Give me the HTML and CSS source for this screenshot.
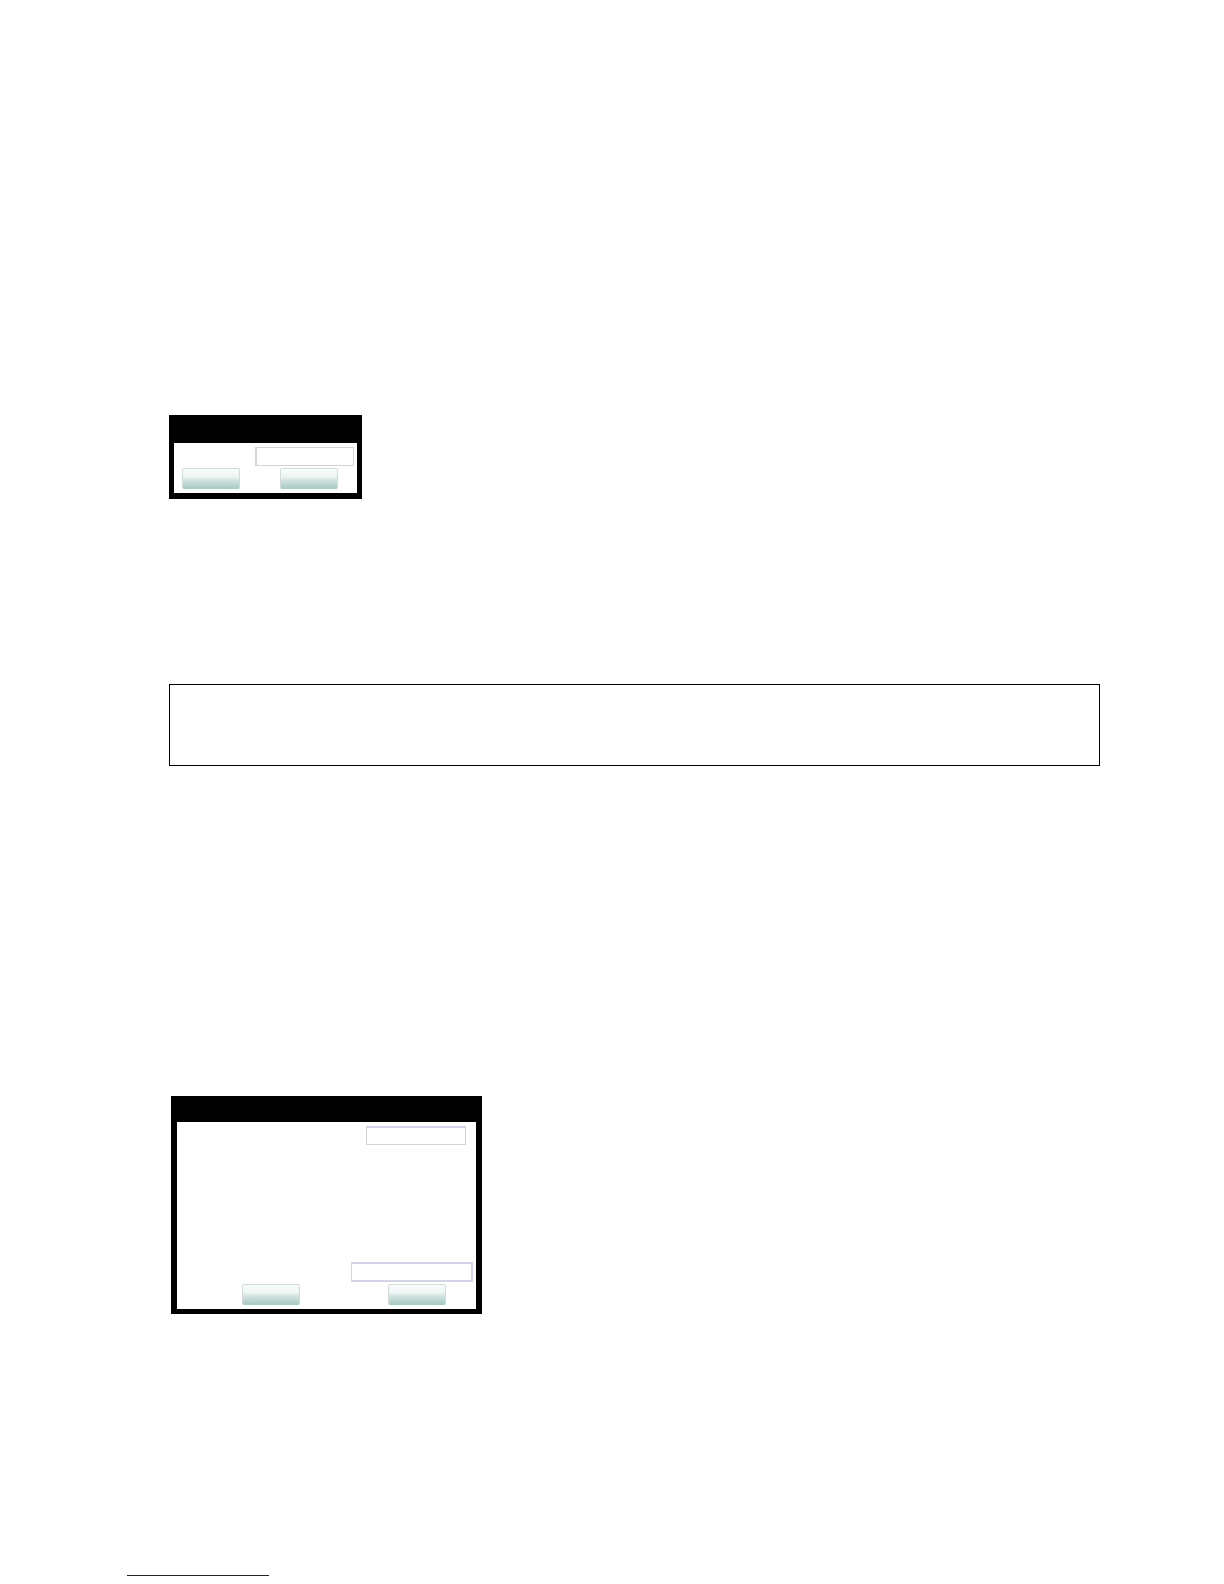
FILE: index.html
```html
<!DOCTYPE html>
<html lang="en">
<head>
    <meta charset="UTF-8">
    <meta name="viewport" content="width=device-width, initial-scale=1.0">
    <title>Document</title>
    <link rel="stylesheet" href="styles.css">
</head>
<body>
    <main class="content">
        <form class="dialog dialog-small">
            <div class="field-row">
                <input class="field" type="text" aria-label="Value">
            </div>
            <div class="button-row">
                <button class="dialog-button" type="button" aria-label="OK"></button>
                <button class="dialog-button" type="button" aria-label="Cancel"></button>
            </div>
        </form>

        <section class="note"></section>

        <form class="dialog dialog-large">
            <div class="field-row">
                <input class="field field-top" type="text" aria-label="First value">
            </div>
            <div class="dialog-space"></div>
            <div class="field-row">
                <input class="field field-wide" type="text" aria-label="Second value">
            </div>
            <div class="button-row">
                <button class="dialog-button" type="button" aria-label="OK"></button>
                <button class="dialog-button" type="button" aria-label="Cancel"></button>
            </div>
        </form>
    </main>

    <footer class="footer">
        <a class="footer-link" href="#" aria-label="Website"></a>
    </footer>
</body>
</html>
```

FILE: styles.css
```css
:root {
    --frame-color: #000000;
    --field-border: #d3d3da;
    --field-accent: #d3d3ee;
    --link-color: #1414a0;
}

* {
    margin: 0;
    padding: 0;
    box-sizing: border-box;
}

body {
    font-family: "Liberation Sans", Arial, sans-serif;
    background-color: #ffffff;
}

.content {
    padding: 415px 124px 0 169px;
}

.dialog {
    display: flex;
    flex-direction: column;
    border: 5px solid var(--frame-color);
    background-color: #ffffff;
}

.dialog-small {
    width: 193px;
    border-top-width: 28px;
    border-bottom-width: 6px;
    padding: 4px 3px;
}

.dialog-large {
    width: 311px;
    margin: 330px 2px 0;
    border-width: 26px 6px 5px;
    padding: 4px 3px;
}

.field-row {
    display: flex;
    justify-content: flex-end;
}

.field {
    width: 99px;
    height: 19px;
    border: 1px solid var(--field-border);
    background-color: #ffffff;
}

.dialog-small .field {
    border-left-width: 2px;
}

.field-top {
    width: 100px;
    margin-right: 7px;
    border-top: 2px solid var(--field-accent);
}

.field-wide {
    width: 122px;
    height: 20px;
    border: 2px solid var(--field-accent);
    border-left-width: 1px;
}

.dialog-space {
    height: 117px;
}

.button-row {
    display: flex;
    gap: 40px;
    margin-top: 2px;
    padding-left: 5px;
}

.dialog-large .button-row {
    gap: 88px;
    padding-left: 62px;
}

.dialog-button {
    width: 58px;
    height: 21px;
    border: 1px solid #d3dbda;
    border-bottom-color: #afcdc6;
    border-radius: 2px;
    background: linear-gradient(#f8fdfc, #edf6f4 40%, #d0e3df 60%, #a8ccc4);
}

.note {
    min-height: 82px;
    margin-top: 185px;
    border: 1px solid #000000;
}

.footer {
    padding: 261px 127px 8px;
}

.footer-link {
    display: block;
    width: 142px;
    border-bottom: 1px solid var(--link-color);
}
```
